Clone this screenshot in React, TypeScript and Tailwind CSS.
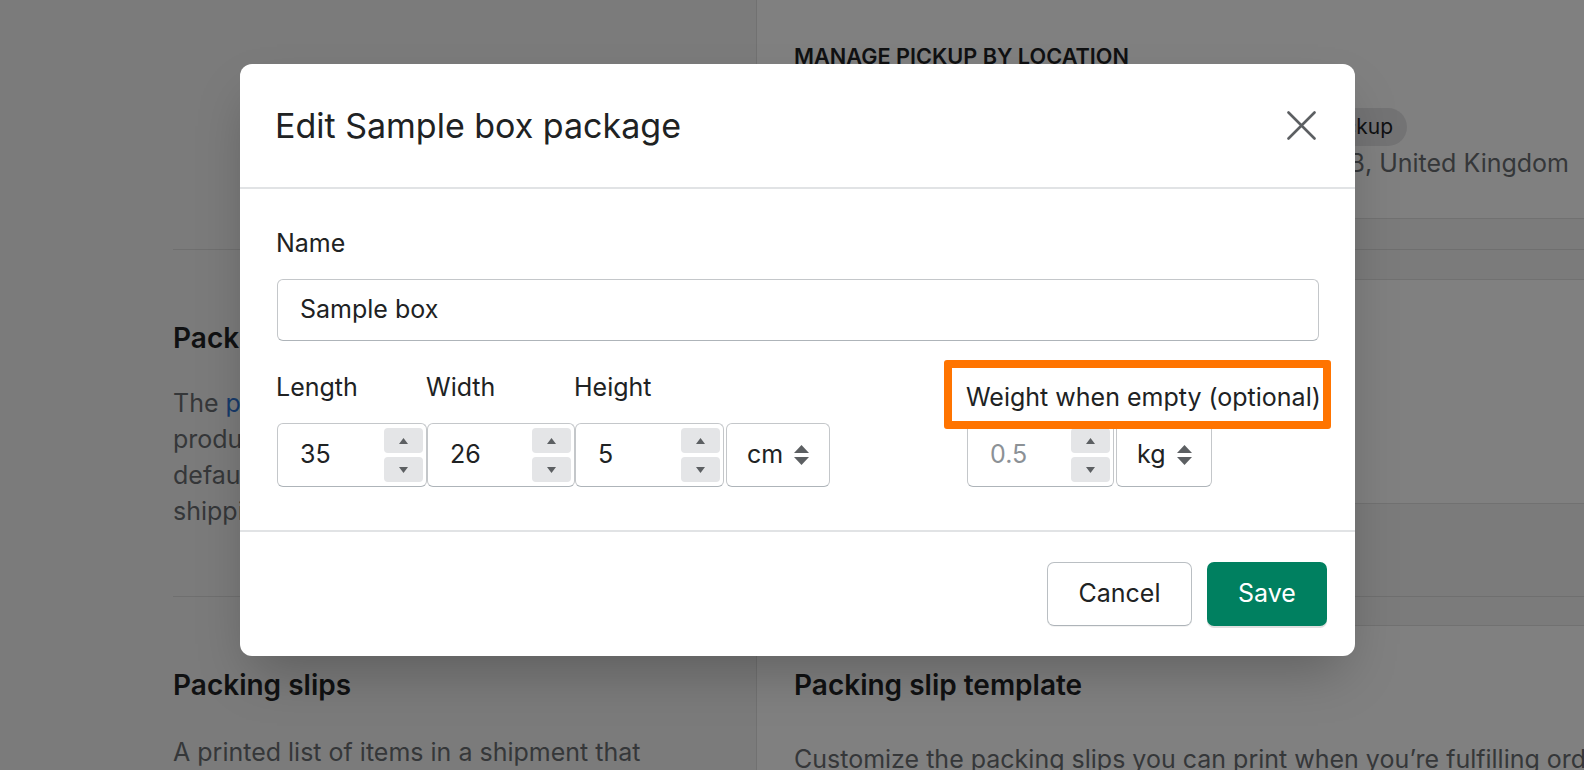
import React from 'react';

const Triangle = ({ up }: { up?: boolean }) => (
  <svg width="9" height="6" viewBox="0 0 9 6">
    <path d={up ? 'M4.5 0L9 6H0z' : 'M0 0H9L4.5 6z'} fill="#5c5f62" />
  </svg>
);

const Spinner = () => (
  <div className="flex flex-col gap-[4px]">
    <div className="w-[39px] h-[25px] rounded-[4px] bg-[#e4e5e7] flex items-center justify-center">
      <Triangle up />
    </div>
    <div className="w-[39px] h-[25px] rounded-[4px] bg-[#e4e5e7] flex items-center justify-center">
      <Triangle />
    </div>
  </div>
);

const SelectArrows = () => (
  <svg width="15" height="20" viewBox="0 0 15 20">
    <path d="M7.5 0L15 8H0z" fill="#5c5f62" />
    <path d="M0 12H15L7.5 20z" fill="#5c5f62" />
  </svg>
);

const NumberBox = ({ value, placeholder, width }: { value: string; placeholder?: boolean; width: string }) => (
  <div className={`${width} h-[64px] bg-white border-[1.5px] border-[#c4c7ca] border-b-[#aeb4b9] rounded-[6px] flex items-center justify-between pl-[22px] pr-[3px]`}>
    <span className={placeholder ? 'text-[#8c9196]' : 'text-[#202223]'}>{value}</span>
    <Spinner />
  </div>
);

const SelectBox = ({ value, width }: { value: string; width: string }) => (
  <div className={`${width} h-[64px] bg-white border-[1.5px] border-[#c4c7ca] border-b-[#aeb4b9] rounded-[6px] flex items-center pl-[20px] gap-[11px] text-[#202223]`}>
    <span>{value}</span>
    <SelectArrows />
  </div>
);

const Field = ({ label, children, width }: { label: string; children: React.ReactNode; width: string }) => (
  <div className={`${width} flex flex-col`}>
    <span className="leading-[32px] h-[32px] text-[#202223] -ml-[1px] whitespace-nowrap">{label}</span>
    <div className="mt-[20px]">{children}</div>
  </div>
);

const App: React.FC = () => {
  return (
    <div className="relative w-full h-[770px] overflow-hidden bg-[#7b7b7b] font-['Inter',sans-serif]">
      {/* page behind the backdrop */}
      <div className="flex flex-col pl-[173px]">
        {/* pickup section */}
        <div className="flex h-[250px] border-b-[1.5px] border-[#6f6f6f]">
          <div className="w-[583px] shrink-0" />
          <div className="flex-1 h-[219px] bg-[#808080] border-l-[1.5px] border-b-[1.5px] border-[#717171] pl-[37px] pt-[42px]">
            <p className="text-[21.7px] leading-[28px] font-semibold text-[#101112]">MANAGE PICKUP BY LOCATION</p>
            <div className="ml-[561px] mt-[38px] w-[52px] overflow-hidden flex justify-end">
              <span className="shrink-0 w-[160px] h-[38px] rounded-full bg-[#737374] flex items-center justify-end pr-[14px] text-[21px] text-[#101112] whitespace-nowrap">
                Local pickup
              </span>
            </div>
            <div className="ml-[561px] mt-[1px] w-[214px] overflow-hidden flex justify-end">
              <span className="shrink-0 whitespace-nowrap text-[25px] leading-[32px] text-[#353739]">
                London EC1V 9BB, United Kingdom
              </span>
            </div>
          </div>
        </div>

        {/* packages section */}
        <div className="flex h-[347px] border-b-[1.5px] border-[#6f6f6f]">
          <div className="w-[583px] shrink-0">
            <div className="w-[67px] overflow-hidden pt-[72px] whitespace-nowrap">
              <h3 className="text-[28px] leading-[32px] font-semibold text-[#101112]">Packages</h3>
              <p className="mt-[31px] text-[25px] leading-[36px] text-[#353739]">
                The <span className="text-[#173a6a]">package</span><br />
                products<br />
                default<br />
                shipping
              </p>
            </div>
          </div>
          <div className="flex-1 mt-[29px] h-[225px] bg-[#808080] border-l-[1.5px] border-y-[1.5px] border-[#717171]" />
        </div>

        {/* packing slips section */}
        <div className="flex h-[200px]">
          <div className="w-[583px] shrink-0 pt-[72px]">
            <h3 className="text-[28px] leading-[32px] font-semibold text-[#101112]">Packing slips</h3>
            <p className="mt-[33px] text-[25px] leading-[36px] text-[#353739]">A printed list of items in a shipment that</p>
          </div>
          <div className="flex-1 mt-[28px] bg-[#808080] border-l-[1.5px] border-t-[1.5px] border-[#717171] pl-[37px] pt-[43px]">
            <h3 className="text-[28px] leading-[32px] font-semibold text-[#101112]">Packing slip template</h3>
            <p className="mt-[40px] text-[25px] leading-[36px] text-[#353739] whitespace-nowrap">
              Customize the packing slips you can print when you’re fulfilling orders.
            </p>
          </div>
        </div>
      </div>

      {/* modal */}
      <div className="absolute left-[240px] top-[64px] w-[1115px] h-[592px] bg-white rounded-[12px] shadow-2xl flex flex-col text-[25px]">
        <div className="h-[125px] flex items-center justify-between pl-[35px] pr-[39px] border-b-2 border-[#e1e3e5]">
          <h2 className="text-[34px] text-[#202223] leading-none">Edit Sample box package</h2>
          <svg width="29" height="29" viewBox="0 0 29 29">
            <path d="M1.5 1.5L27.5 27.5M27.5 1.5L1.5 27.5" stroke="#5c5f62" strokeWidth="2.6" strokeLinecap="round" />
          </svg>
        </div>

        <div className="pl-[37px] pr-[36px] pt-[38px] pb-[43px]">
          <div className="leading-[32px] text-[#202223] -ml-[1px]">Name</div>
          <div className="mt-[20px] h-[62px] border-[1.5px] border-[#c4c7ca] border-b-[#aeb4b9] rounded-[6px] flex items-center px-[22px] text-[#202223]">
            Sample box
          </div>

          <div className="mt-[30px] flex">
            <Field label="Length" width="w-[150px]">
              <NumberBox value="35" width="w-[150px]" />
            </Field>
            <Field label="Width" width="w-[148px]">
              <NumberBox value="26" width="w-[148px]" />
            </Field>
            <Field label="Height" width="w-[149px]">
              <NumberBox value="5" width="w-[149px]" />
            </Field>
            <div className="ml-[2px] pt-[52px]">
              <SelectBox value="cm" width="w-[104px]" />
            </div>

            <div className="relative ml-[137px] flex flex-col">
              <span className="pt-[10px] leading-[32px] whitespace-nowrap text-[#202223] -ml-[1px]">Weight when empty (optional)</span>
              <div className="mt-[10px] flex gap-[2px]">
                <NumberBox value="0.5" placeholder width="w-[147px]" />
                <SelectBox value="kg" width="w-[96px]" />
              </div>
              {/* annotation */}
              <div className="absolute -left-[23px] -top-[11px] w-[387px] h-[69px] border-[8px] border-[#ff7400] rounded-[3px]" />
            </div>
          </div>
        </div>

        <div className="border-t-2 border-[#e1e3e5] flex justify-end gap-[15px] pt-[30px] pr-[28px]">
          <button className="w-[145px] h-[64px] rounded-[7px] border-[1.5px] border-[#babfc3] border-b-[#aeb4b9] shadow-[0_1px_0_rgba(0,0,0,0.05)] text-[#202223]">
            Cancel
          </button>
          <button className="w-[120px] h-[64px] rounded-[7px] bg-[#008060] text-white shadow-[0_2px_0_rgba(0,0,0,0.12)]">
            Save
          </button>
        </div>
      </div>
    </div>
  );
};

export default App;
